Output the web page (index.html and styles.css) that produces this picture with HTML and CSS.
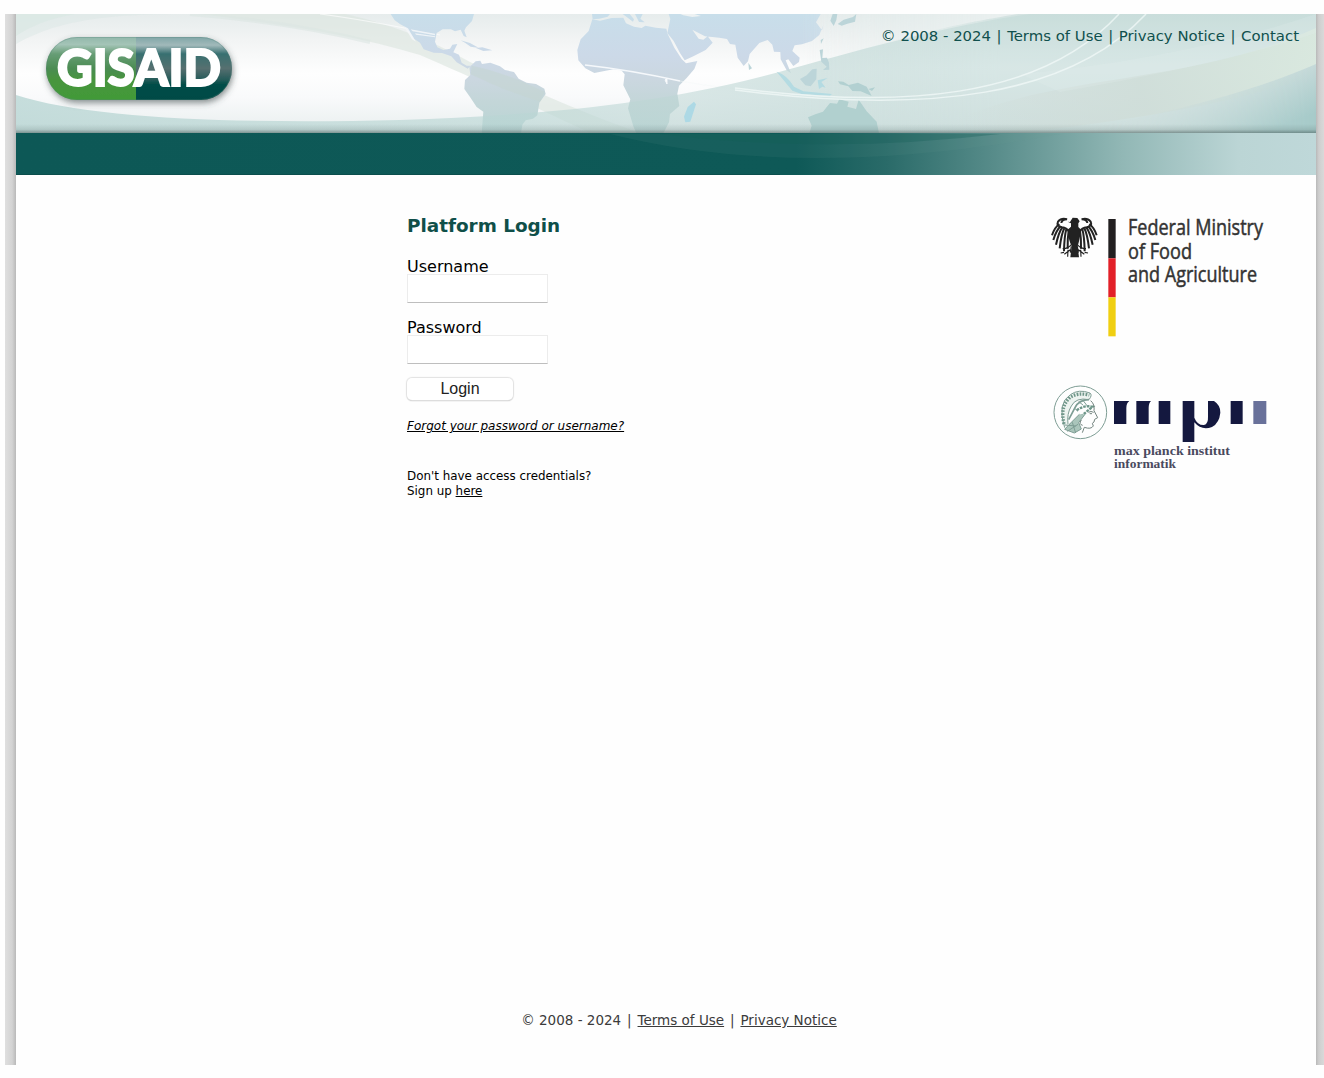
FILE: index.html
```html
<!DOCTYPE html>
<html lang="en">
<head>
<meta charset="utf-8">
<title>GISAID - Platform Login</title>
<link rel="stylesheet" href="styles.css">
</head>
<body>
<div class="frame">
  <div class="rail rail-left"></div>
  <div class="page">
    <header class="header">
      <svg class="banner" viewBox="16 14 1300 161" width="1300" height="161" aria-hidden="true">
        <defs>
          <linearGradient id="sky" x1="0" y1="0" x2="0" y2="1"><stop offset="0" stop-color="#e6ecec"/><stop offset=".22" stop-color="#f2f4f4"/><stop offset=".5" stop-color="#fefefe"/><stop offset=".7" stop-color="#f9fafb"/><stop offset="1" stop-color="#e8eeee"/></linearGradient>
          <linearGradient id="land" gradientUnits="userSpaceOnUse" x1="0" y1="42" x2="0" y2="397"><stop offset="0" stop-color="#c8deea"/><stop offset=".35" stop-color="#ccd9e8"/><stop offset=".55" stop-color="#cbd7e0"/><stop offset=".75" stop-color="#c3d6d8"/><stop offset="1" stop-color="#b9d4d4"/></linearGradient>
          <linearGradient id="right" gradientUnits="userSpaceOnUse" x1="0" y1="14" x2="0" y2="132"><stop offset="0" stop-color="#c7ddda"/><stop offset=".45" stop-color="#dceae9"/><stop offset="1" stop-color="#cfdfdd"/></linearGradient>
          <linearGradient id="fadeIn" gradientUnits="userSpaceOnUse" x1="800" y1="0" x2="1000" y2="0"><stop offset="0" stop-color="#fff" stop-opacity="0"/><stop offset="1" stop-color="#fff"/></linearGradient>
          <mask id="fadeMask"><rect x="780" y="14" width="536" height="120" fill="url(#fadeIn)"/></mask>
          <linearGradient id="wave" gradientUnits="userSpaceOnUse" x1="16" y1="0" x2="900" y2="0"><stop offset="0" stop-color="#b9d6d4" stop-opacity=".8"/><stop offset=".55" stop-color="#b9d6d4" stop-opacity=".62"/><stop offset=".75" stop-color="#bdd6d4" stop-opacity=".55"/><stop offset="1" stop-color="#c7dcda" stop-opacity=".8"/></linearGradient>
          <linearGradient id="ribbon" gradientUnits="userSpaceOnUse" x1="960" y1="110" x2="1316" y2="30"><stop offset="0" stop-color="#cfdad6" stop-opacity="0"/><stop offset=".5" stop-color="#cfddd8"/><stop offset="1" stop-color="#dae9de"/></linearGradient>
          <linearGradient id="corner" gradientUnits="userSpaceOnUse" x1="1220" y1="75" x2="1245" y2="140"><stop offset="0" stop-color="#d5e1e1"/><stop offset="1" stop-color="#a6cac9"/></linearGradient>
          <linearGradient id="cornerFade" gradientUnits="userSpaceOnUse" x1="1080" y1="0" x2="1316" y2="0"><stop offset="0" stop-color="#fff" stop-opacity="0"/><stop offset="1" stop-color="#fff"/></linearGradient>
          <mask id="cornerMask"><rect x="1000" y="14" width="316" height="120" fill="url(#cornerFade)"/></mask>
          <linearGradient id="shade" x1="0" y1="0" x2="0" y2="1"><stop offset="0" stop-color="#445a58" stop-opacity="0"/><stop offset=".6" stop-color="#445a58" stop-opacity=".15"/><stop offset="1" stop-color="#445a58" stop-opacity=".55"/></linearGradient>
          <linearGradient id="bar" x1="0" y1="0" x2="1" y2="0"><stop offset="0" stop-color="#0d5856"/><stop offset=".6" stop-color="#0e5957"/><stop offset=".67" stop-color="#2a6b69"/><stop offset=".75" stop-color="#568b89"/><stop offset=".85" stop-color="#91b7b5"/><stop offset=".94" stop-color="#bbd5d5"/><stop offset="1" stop-color="#bfd8d9"/></linearGradient>
          <linearGradient id="green" x1="0" y1="0" x2="0" y2="1"><stop offset="0" stop-color="#92b8ab"/><stop offset=".12" stop-color="#a4c4b7"/><stop offset=".27" stop-color="#679d75"/><stop offset=".5" stop-color="#4b8c53"/><stop offset=".68" stop-color="#47953d"/><stop offset="1" stop-color="#429a38"/></linearGradient>
          <linearGradient id="teal" x1="0" y1="0" x2="0" y2="1"><stop offset="0" stop-color="#80a6a7"/><stop offset=".13" stop-color="#a1b9ba"/><stop offset=".27" stop-color="#386f70"/><stop offset=".5" stop-color="#566f70"/><stop offset=".68" stop-color="#255b59"/><stop offset=".75" stop-color="#024d48"/><stop offset="1" stop-color="#014a45"/></linearGradient>
          <filter id="drop" x="-10%" y="-20%" width="120%" height="150%"><feDropShadow dx="1" dy="3" stdDeviation="3" flood-color="#3a4a4a" flood-opacity=".6"/></filter>
          <clipPath id="pill"><rect x="46" y="37" width="186" height="63" rx="31"/></clipPath>
          <clipPath id="top"><rect x="16" y="14" width="1300" height="119"/></clipPath>
        </defs>
        <rect x="16" y="14" width="1300" height="119" fill="url(#sky)"/>
        <g clip-path="url(#top)">
          <path d="M16 44C50 25 90 14 180 14H16Z" fill="#dce8e5" opacity=".5"/>
          <path d="M16 14H75Q40 20 16 36Z" fill="#d9e7e3" opacity=".6"/>
          <path d="M200 14H345Q410 28 470 62C520 84 570 108 640 133H590C520 100 460 72 420 55C350 34 280 24 200 14Z" fill="#dbe5df" opacity=".62"/>
          <path d="M190 14Q290 22 370 42" fill="none" stroke="#dce6e2" stroke-width="4" opacity=".6"/>
          <path d="M320 14Q360 19 440 35" fill="none" stroke="#fff" stroke-width="1.200" opacity=".6"/>
          <g transform="translate(340 0) scale(.333333)" fill="url(#land)">
            <path d="M152 42H402L396 63 378 82 373 92 380 112 371 108 362 89 345 94 333 88 308 88 290 99 285 125 292 142 310 150 330 146 337 134 352 132 340 157 357 164 365 188 380 197 393 197 383 206 350 187 334 169 306 159 281 158 251 148 240 128 222 116 206 94 192 79 181 73 164 61Z"/>
            <path d="M362 121 390 129 417 144 392 140 375 128ZM408 144 427 142 457 151 430 153Z"/>
            <path d="M388 202 407 184 421 182 426 192 451 188 480 199 495 210 522 216 536 236 560 248 588 252 613 266 617 282 598 308 592 346 579 356 557 361 547 374 543 400H425L430 335 410 321 390 291 373 267 375 240 391 225Z"/>
            <path d="M192 79 204 85 228 125 216 118ZM212 88 285 101 285 106 218 94ZM225 100 286 109 285 112 228 104Z" fill="#f4f7f9" opacity=".85"/>
            <path d="M395 197Q460 210 536 240L613 275 600 305Q500 275 392 223Z" fill="#c4d6d2" opacity=".55"/>
          </g>
          <g transform="translate(560 0) scale(.333333)" fill="url(#land)">
            <path d="M97 58 120 62 155 54 190 53 198 70 222 80 245 84 256 77 288 83 319 86 323 102 343 143 365 177 378 190 412 183 403 207 380 234 357 257 352 281 358 318 330 342 327 367 310 400H229L220 379 204 325 211 298 190 256 194 223 184 211 160 208 103 219 76 205 55 181 52 150 62 118 86 93Z"/>
            <path d="M96 42H150L143 50 118 56 98 58ZM188 42H209L222 58 219 65 204 54ZM225 42H248L241 56 254 67 237 66ZM326 81 331 57 326 42H782L768 67 786 91 790 75 778 105 756 123 726 133 704 136 697 153 719 173 717 186 700 198 685 178 677 181 693 220 680 211 662 178 661 156 642 155 637 134 623 120 598 129 569 162 564 184 551 198 533 173 526 134 510 132 501 117 478 113 435 109 397 89 416 116 430 119 443 109 458 128 437 150 400 169 374 181 360 159 341 123 322 99Z"/>
            <path d="M357 40H397L423 48 397 51 370 46Z" fill="#edf2f3"/>
          </g>
          <path d="M585 65Q630 70 680 81" fill="none" stroke="#f5f8fb" stroke-width="1.700"/>
          <path d="M680 81Q740 92 820 94" fill="none" stroke="#f6faf9" stroke-width="1.200" opacity=".5"/>
          <path d="M667 78V84L665 80Z" fill="#fff" stroke="#f5f8fb"/>
          <path d="M16 95C90 119 240 124 400 120C540 115 650 105 760 77C840 56 930 28 1030 14H1316V133H16Z" fill="url(#wave)"/>
          <path d="M780 14H1316V133H780Z" fill="url(#right)" opacity=".6" mask="url(#fadeMask)"/>
          <path d="M780 14H1018C950 25 900 37 780 72Z" fill="#f3f5f5" opacity=".7" mask="url(#fadeMask)"/>
          <path d="M930 133C1040 70 1180 90 1316 28V75C1230 105 1130 120 1020 133Z" fill="url(#ribbon)" opacity=".85"/>
          <path d="M1070 133C1170 112 1250 93 1316 64V133Z" fill="url(#corner)" mask="url(#cornerMask)"/>
          <path d="M1020 74Q1180 60 1316 14V33Q1230 62 1060 92Z" fill="#e6f1f1" opacity=".2"/>
          <g transform="translate(560 0) scale(.333333)" fill="#bcd5d9">
            <path d="M565 188 576 205 567 210ZM818 42H832L829 60 821 78 811 62ZM833 72 851 59 879 51 889 42 885 65 862 71 845 77ZM782 120 791 115 783 132ZM779 150 789 148 787 174 801 173 807 188 808 209 789 210 800 200 784 185ZM720 237 740 226 757 208 770 206 769 238 752 259 736 256Z"/>
            <path d="M650 215Q680 224 702 260L730 274 816 282 810 287 725 282 697 272ZM773 241 803 234 784 246 797 263 787 260 777 267Z" fill="#b4dbe2"/>
            <path d="M834 244 850 245 866 255 894 248 920 260 935 288 902 274 877 273 865 259 840 253ZM925 267 945 262 936 273Z" fill="#b2d0d1"/>
            <path d="M744 352 766 343 789 335 810 309 831 311 838 298 866 305 862 320 888 327 896 299 920 334 950 365 957 400H748L755 377Z" fill="#b1d0cf"/>
            <path d="M402 305 408 313 391 365 376 367 372 350 383 321Z" fill="#add9e5"/>
          </g>
          <g fill="none" stroke="#f3faf9" stroke-width="1.500" opacity=".75">
            <path d="M735 88C900 109 1040 100 1119 14"/>
            <path d="M735 90C930 115 1070 96 1146 14"/>
          </g>
          <rect x="16" y="124" width="1300" height="9" fill="url(#shade)"/>
        </g>
        <rect x="16" y="133" width="1300" height="42" fill="url(#bar)"/>
        <path d="M660 134H1000Q900 146 800 144Q720 142 660 134Z" fill="#0a5550" opacity=".3"/>
        <path d="M610 134Q800 182 1060 134Z" fill="#6aa090" opacity=".1"/>
        <path d="M16 174.500H780" stroke="#0a4544" opacity=".5"/>
        <g filter="url(#drop)"><g clip-path="url(#pill)">
          <rect x="46" y="37" width="90" height="63" fill="url(#green)"/>
          <rect x="136" y="37" width="96" height="63" fill="url(#teal)"/>
        </g></g>
        <rect x="46.500" y="37.500" width="185" height="62" rx="30.500" fill="none" stroke="#56837b" stroke-opacity=".3"/>
        <text class="brand" x="57" y="85.500" textLength="164" lengthAdjust="spacingAndGlyphs">GISAID</text>
      </svg>
      <nav class="top-links">© 2008 - 2024 <span class="sep">|</span> <a>Terms of Use</a> <span class="sep">|</span> <a>Privacy Notice</a> <span class="sep">|</span> <a>Contact</a></nav>
    </header>

    <main class="content">
      <form class="login">
        <h1>Platform Login</h1>
        <label class="field">Username<input type="text"></label>
        <label class="field">Password<input type="password"></label>
        <button type="button">Login</button>
        <a class="forgot">Forgot your password or username?</a>
        <p class="signup">Don't have access credentials?<br>Sign up <a>here</a></p>
      </form>
      <aside class="partners">
        <svg class="ministry" viewBox="1045 210 230 130" width="230" height="130" role="img" aria-label="Federal Ministry of Food and Agriculture">
          <g transform="translate(1046 212) scale(.333333)">
            <path d="M72 30 80 17 94 18 101 28 97 34V45L105 53Q101 84 95 102L99 136H73L77 102Q67 84 65 53L75 44V34L65 29Z" fill="#222"/>
            <g id="wing" fill="none" stroke="#222" stroke-width="6">
              <path d="M70 60Q62 47 48 46Q30 42 36 29Q46 17 63 22Q47 23 46 33"/>
              <path d="M40 36Q25 47 18 70M44 42Q30 56 22 84M49 46Q38 61 30 98M55 49Q46 66 41 109M61 52Q55 72 54 118M68 56Q64 82 65 110"/>
              <path d="M76 98Q65 111 50 110M73 113 55 127M66 113 65 134M54 121 44 123M76 103 73 122" stroke-width="3.500"/>
            </g>
            <use href="#wing" transform="matrix(-1 0 0 1 170 0)"/>
          </g>
          <g transform="translate(1030 200) scale(.333333)">
            <rect x="235" y="57" width="22" height="118" fill="#221f20"/><rect x="235" y="175" width="22" height="117" fill="#e22028"/><rect x="235" y="292" width="22" height="117" fill="#f0cf12"/>
          </g>
          <g class="ministry-text">
            <text x="1128" y="235" textLength="135" lengthAdjust="spacingAndGlyphs">Federal Ministry</text>
            <text x="1128" y="258.500" textLength="64" lengthAdjust="spacingAndGlyphs">of Food</text>
            <text x="1128" y="282" textLength="129" lengthAdjust="spacingAndGlyphs">and Agriculture</text>
          </g>
        </svg>
        <svg class="mpi" viewBox="1045 380 230 95" width="230" height="95" role="img" aria-label="max planck institut informatik">
          <g transform="translate(1050 380) scale(.333333)" fill="none" stroke="#7d9d94" stroke-width="3">
            <circle cx="91" cy="97" r="79"/>
            <path d="M44 143Q20 70 61 44Q86 26 120 39Q128 45 117 59Q78 51 64 78Q50 101 54 133" fill="#edf3f0"/>
            <path d="M42 132Q29 77 62 51Q84 37 118 45" stroke="#6f9689" stroke-width="10" stroke-dasharray="5 4"/>
            <path d="M117 59Q87 59 75 83L56 119" stroke-width="5"/>
            <path d="M80 91Q101 75 128 80L59 137" stroke="#6d9689" stroke-width="7" stroke-dasharray="8 3"/>
            <path d="M88 103 57 134 44 148 73 159 94 147 86 128 105 103" fill="#aac5bb"/>
            <path d="M86 65 99 75M99 61 111 77M74 85 84 94M44 135 78 138M52 154 84 133M67 127 77 159"/>
            <path d="M122 62Q135 73 132 92L143 113 134 118 132 126 127 130 130 138Q123 149 103 142L97 158M115 97Q123 92 131 97M119 101H126M94 120Q85 133 98 136" stroke="#71837d"/>
          </g>
          <g transform="translate(1030 370) scale(.333333)">
            <g fill="#14183f">
              <path d="M252 93H298Q289 99 289 114V162H252ZM319 93H363Q356 99 356 114V162H319ZM386 93H421V162H386ZM458 93H493V143Q502 166 522 165Q535 162 534 140V93H552Q572 106 571 128Q568 159 546 171Q515 183 493 157V216H458ZM602 93H638V162H602Z"/>
              <path d="M670 93H709V162H670Z" fill="#69719a"/>
            </g>
          </g>
          <g class="mpi-text">
            <text x="1114" y="454.500" textLength="116" lengthAdjust="spacingAndGlyphs">max planck institut</text>
            <text x="1114" y="467.500" textLength="62" lengthAdjust="spacingAndGlyphs">informatik</text>
          </g>
        </svg>
      </aside>
    </main>
    <footer class="footer">© 2008 - 2024 <span class="sep">|</span> <a>Terms of Use</a> <span class="sep">|</span> <a>Privacy Notice</a></footer>
  </div>
  <div class="rail rail-right"></div>
</div>
</body>
</html>
```
FILE: styles.css
```css
* { box-sizing: border-box; }
body {
  margin: 0;
  padding: 14px 0 13px 5px;
  background: #fefefe;
  color: #000;
  font-family: Verdana, "DejaVu Sans", sans-serif;
  overflow: hidden;
}
.frame { display: flex; width: 1319px; height: 1051px; }
.rail-left { width: 11px; background: linear-gradient(90deg, #dfdfdf, #d3d3d3 65%, #b9b9b9); }
.rail-right { width: 8px; background: linear-gradient(90deg, #b9b9b9, #cecece 35%, #d9d9d9); }
.page { width: 1300px; display: flex; flex-direction: column; background: #fefefe; }
.header { position: relative; height: 161px; padding: 12px 17px 0 0; }
.banner { position: absolute; left: 0; top: 0; display: block; }
.brand { font: 900 51px Lato, sans-serif; fill: #fff; stroke: #fff; stroke-width: 2px; }
.top-links { position: relative; text-align: right; font-size: 14.900px; line-height: 20px; color: #10504d; }
.sep { margin: 0 .8px; }
.content { flex: 1; display: flex; justify-content: space-between; padding: 35px 41px 0 391px; }
.login { display: flex; flex-direction: column; align-items: flex-start; }
h1 { margin: 4px 0 19px; font-size: 18.400px; line-height: 24px; color: #0f4f49; }
.field { display: flex; flex-direction: column; margin-bottom: 14px; font-size: 16px; line-height: 20px; height: 47px; }
.field input {
  width: 141px; height: 29px; flex: none; margin-top: -3px; padding: 2px;
  border: 1px solid #ececec; border-bottom-color: #bebebe; background: #fff; outline: none;
}
button {
  width: 106px; height: 22px; margin: -1px 0 0; padding: 0;
  border: 0; border-radius: 5px; background: #fff;
  box-shadow: 0 0 1px 1px #e2e2e2, 0 1px 1px #aaa;
  font: 16px/22px "Liberation Sans", Arial, sans-serif; color: #222;
}
.forgot { margin-top: 18px; font-size: 12px; line-height: 16px; font-style: italic; text-decoration: underline; }
.signup { margin: 35px 0 0; font-size: 11.900px; line-height: 15px; }
.signup a, .footer a { text-decoration: underline; }
.partners { display: flex; flex-direction: column; width: 230px; gap: 40px; }
.partners svg { display: block; flex: none; overflow: visible; }
.ministry-text { font: 400 21px "Open Sans", sans-serif; fill: #333; stroke: #333; stroke-width: .5px; }
.mpi-text { font: 700 13px "Liberation Serif", serif; fill: #4a4a5e; }
.footer { height: 55px; padding-left: 26px; text-align: center; font-size: 13.500px; line-height: 20px; color: #3b3b3b; }
.footer .sep { margin: 0 1.600px; }
```
